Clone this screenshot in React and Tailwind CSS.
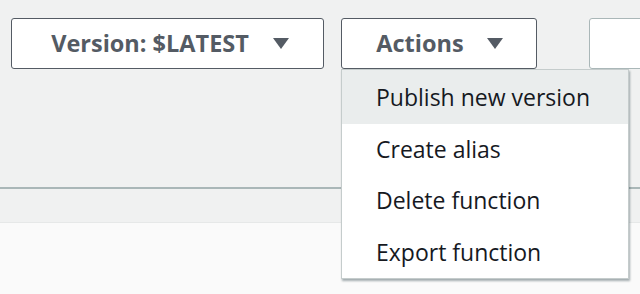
export default function App() {
  const font = { fontFamily: '"Open Sans", "Noto Sans", sans-serif' };
  const Tri = () => (
    <svg width="18" height="13" viewBox="0 0 18 13" className="shrink-0">
      <path d="M1 1 L17 1 L9 12 Z" fill="#545b64" />
    </svg>
  );
  return (
    <div className="relative w-[640px] h-[294px] overflow-hidden bg-[#fafafa]" style={font}>
      <div className="h-[189px] bg-[#f0f1f1] border-b-[2px] border-[#aab7b8]">
        <div className="flex pt-[18px] pl-[11px]">
          <button className="shrink-0 w-[313px] h-[51px] flex items-center justify-center gap-[23px] bg-white border-[1.5px] border-[#545b64] rounded-[3px] text-[23.5px] font-bold text-[#545b64] pl-[6px]">
            <span>Version: $LATEST</span>
            <Tri />
          </button>
          <button className="shrink-0 ml-[17px] w-[196px] h-[51px] flex items-center justify-center gap-[22px] bg-white border-[1.5px] border-[#545b64] rounded-[3px] text-[23.5px] font-bold text-[#545b64] pl-[2px]">
            <span>Actions</span>
            <Tri />
          </button>
          <button className="ml-[52px] w-[120px] h-[51px] shrink-0 bg-white border-[1.5px] border-[#aab7b8] rounded-[3px]"></button>
        </div>
      </div>
      <div className="h-[34px] bg-[#f0f1f1] border-b border-[#e6e8e8]"></div>
      <div className="absolute left-[341px] top-[69px] w-[288px] bg-white border border-[#c5cccc] shadow-[1px_2px_2px_rgba(0,28,36,0.35)] text-[23px] text-[#16191f]">
        <div className="h-[54px] flex items-center pl-[34px] bg-[#eaeded]">Publish new version</div>
        <div className="h-[51px] flex items-center pl-[34px]">Create alias</div>
        <div className="h-[51px] flex items-center pl-[34px]">Delete function</div>
        <div className="h-[52px] flex items-center pl-[34px]">Export function</div>
      </div>
    </div>
  );
}
